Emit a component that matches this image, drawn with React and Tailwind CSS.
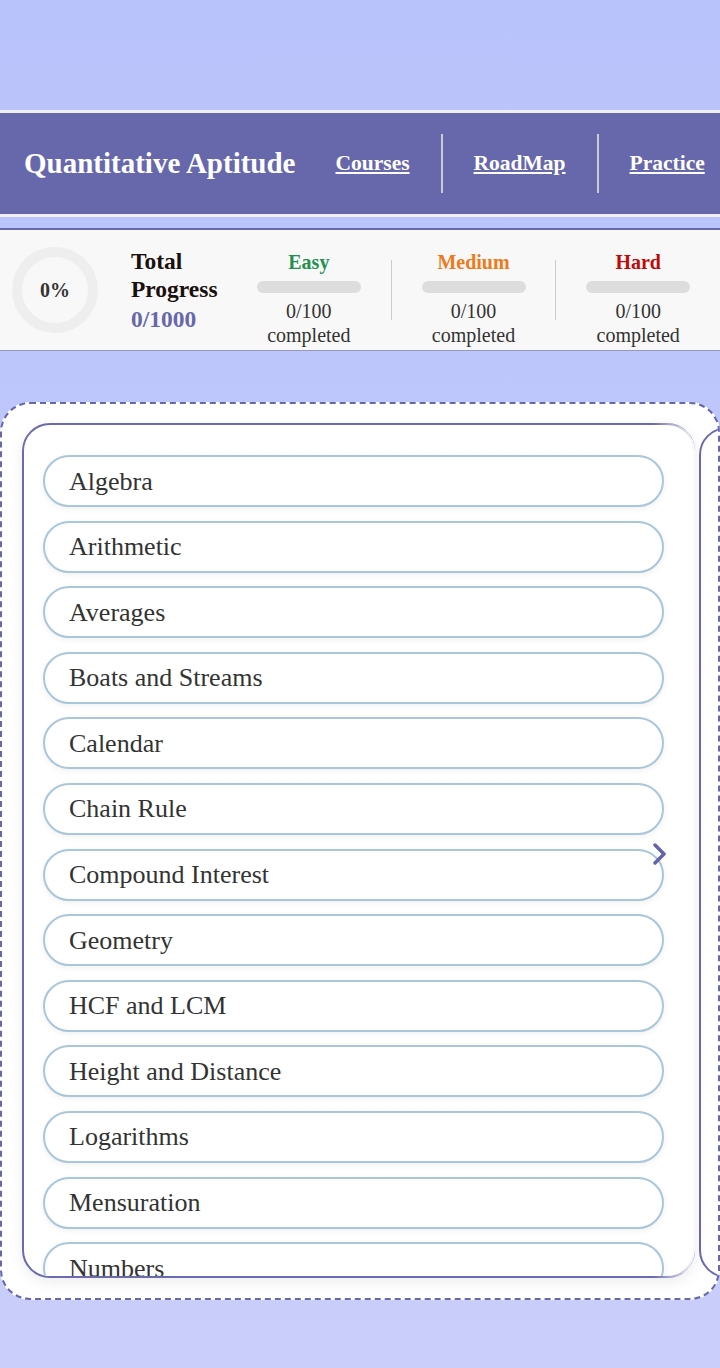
import React from "react";

const topics = [
  "Algebra",
  "Arithmetic",
  "Averages",
  "Boats and Streams",
  "Calendar",
  "Chain Rule",
  "Compound Interest",
  "Geometry",
  "HCF and LCM",
  "Height and Distance",
  "Logarithms",
  "Mensuration",
  "Numbers",
  "Partnership",
  "Percentage",
];

function Level({ label, color }) {
  return (
    <div className="flex w-[164px] flex-col items-center pt-[17px]">
      <div className={`text-[20px] font-bold leading-[24px] ${color}`}>{label}</div>
      <div className="mt-[7px] h-[12px] w-[104px] rounded-full bg-[#dddddd]" />
      <div className="mt-[6px] text-[20px] leading-[24px] text-[#333]">0/100</div>
      <div className="text-[20px] leading-[24px] text-[#333]">completed</div>
    </div>
  );
}

export default function App() {
  return (
    <div
      className="min-h-[1368px] w-full bg-gradient-to-b from-[#b9c3fb] to-[#c9cefa] pt-[110px]"
      style={{ fontFamily: '"Liberation Serif", "Times New Roman", serif' }}
    >
      {/* Nav */}
      <nav className="flex h-[107px] items-center border-y-[3px] border-[#efeff5] bg-[#6767ac] pl-6">
        <h1 className="text-[29px] font-bold text-white">Quantitative Aptitude</h1>
        <div className="ml-[9px] flex items-center">
          <a className="px-[31px] text-[21.5px] font-bold text-white underline">Courses</a>
          <div className="h-[59px] w-[2px] bg-[#cccccc]" />
          <a className="px-[31px] text-[21.5px] font-bold text-white underline">RoadMap</a>
          <div className="h-[59px] w-[2px] bg-[#cccccc]" />
          <a className="pl-[31px] text-[21.5px] font-bold text-white underline">Practice</a>
        </div>
      </nav>

      {/* Stats */}
      <div className="mt-[11px] flex h-[123px] items-center border-t-2 border-b border-t-[#6767ac] border-b-[#9898b8] bg-[#f8f8f8] pl-3">
        <div className="flex h-[86px] w-[86px] shrink-0 items-center justify-center rounded-full border-[10px] border-[#eeeeee]">
          <span className="text-[20px] font-bold text-[#333]">0%</span>
        </div>
        <div className="ml-[33px] w-[96px] shrink-0">
          <div className="text-[23.5px] font-bold leading-[28px] text-[#1a1010]">Total</div>
          <div className="text-[23.5px] font-bold leading-[28px] text-[#1a1010]">Progress</div>
          <div className="mt-[2px] text-[23.5px] font-bold leading-[28px] text-[#6767ac]">0/1000</div>
        </div>
        <Level label="Easy" color="text-[#1f9150]" />
        <div className="h-[60px] w-px bg-[#cccccc]" />
        <Level label="Medium" color="text-[#ee7a1a]" />
        <div className="h-[60px] w-px bg-[#cccccc]" />
        <Level label="Hard" color="text-[#c00a0a]" />
      </div>

      {/* Carousel */}
      <div className="mt-[51px] h-[898px] overflow-hidden rounded-[30px] border-2 border-dashed border-[#6767ac] bg-white px-[20px] pt-[19px]">
        <div className="flex gap-[4px]">
          <div className="relative h-[855px] w-[673px] shrink-0 rounded-[28px] border-2 border-[#6a6aae] bg-white shadow-[0_4px_14px_rgba(0,0,0,0.08)]">
            <div className="pointer-events-none absolute -top-[2px] -right-[2px] -bottom-[2px] w-[42px] rounded-r-[28px] bg-gradient-to-r from-transparent to-white" />
            <div className="relative z-10 h-full overflow-hidden rounded-[26px] pl-[19px] pr-[29px] pt-[30px]">
              <div className="flex flex-col gap-[13.6px]">
                {topics.map((t) => (
                  <div
                    key={t}
                    className="flex h-[52px] shrink-0 items-center rounded-full border-2 border-[#a9c6da] bg-white pl-[24px] text-[26px] text-[#333] shadow-[0_2px_6px_rgba(0,0,0,0.06)]"
                  >
                    {t}
                  </div>
                ))}
              </div>
            </div>
            <svg
              className="absolute right-[25px] top-[418px] z-20"
              width="16"
              height="22"
              viewBox="0 0 16 22"
              fill="none"
            >
              <polyline points="3,2 12,11 3,20" stroke="#6464aa" strokeWidth="3.5" strokeLinecap="round" strokeLinejoin="round" />
            </svg>
          </div>
          <div className="mt-[4px] h-[851px] w-[673px] shrink-0 rounded-[28px] border-2 border-[#6a6aae] bg-white" />
        </div>
      </div>
    </div>
  );
}
